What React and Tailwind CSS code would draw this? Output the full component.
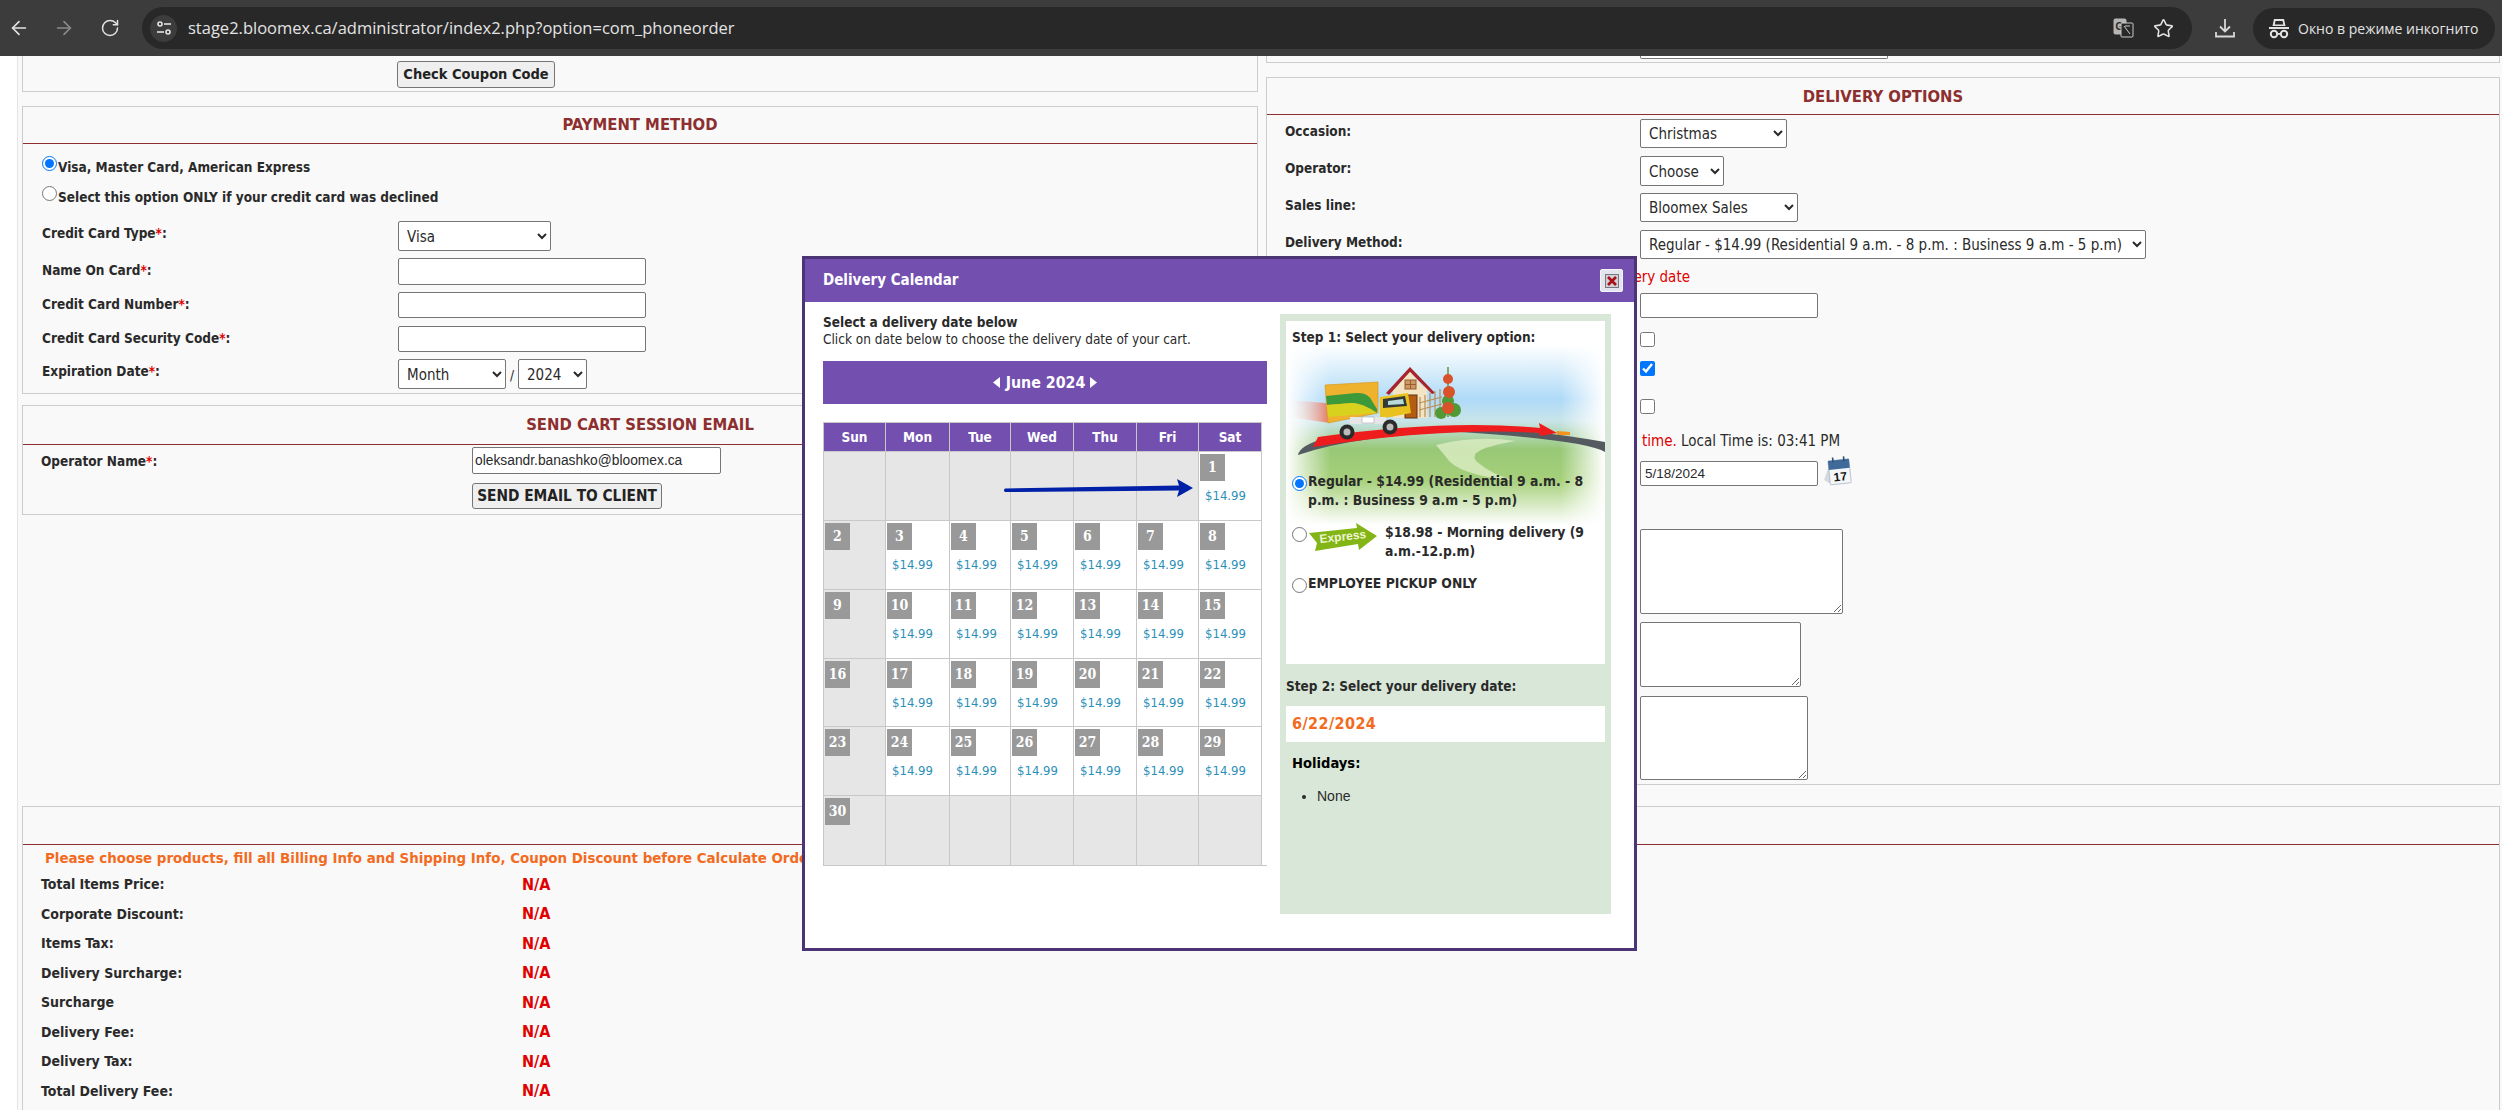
import React from "react";
import { ArrowLeft, ArrowRight, RotateCw, Star } from "lucide-react";

const days = [
  [null, null, null, null, null, null, 1],
  [2, 3, 4, 5, 6, 7, 8],
  [9, 10, 11, 12, 13, 14, 15],
  [16, 17, 18, 19, 20, 21, 22],
  [23, 24, 25, 26, 27, 28, 29],
  [30, null, null, null, null, null, null],
];
const rowHeights = ["h-[69px]", "h-[69px]", "h-[69px]", "h-[68px]", "h-[69px]", "h-[69px]"];
const totals = [
  "Total Items Price:",
  "Corporate Discount:",
  "Items Tax:",
  "Delivery Surcharge:",
  "Surcharge",
  "Delivery Fee:",
  "Delivery Tax:",
  "Total Delivery Fee:",
];

function Req() {
  return <span className="text-[#e00000]">*</span>;
}

function ChromeBar() {
  return (
    <div className="h-[56px] bg-[#3c3c3c] flex items-center text-[#e3e3e3] font-['Open_Sans',sans-serif] [font-stretch:normal]">
      <div className="w-[142px] flex items-center shrink-0">
        <ArrowLeft size={22} strokeWidth={1.8} className="ml-[8px]" />
        <ArrowRight size={22} strokeWidth={1.8} className="ml-[23px] text-[#8a8a8a]" />
        <RotateCw size={20} strokeWidth={1.8} className="ml-[25px]" />
      </div>
      <div className="w-[2050px] h-[42px] bg-[#282828] rounded-full flex items-center shrink-0">
        <div className="w-[27px] h-[27px] ml-[8px] rounded-full bg-[#3c3c3c] flex items-center justify-center">
          <svg width="16" height="16" viewBox="0 0 16 16" fill="none" stroke="#e3e3e3" strokeWidth="1.6">
            <circle cx="4" cy="4" r="2" />
            <path d="M8 4h7" />
            <circle cx="12" cy="12" r="2" />
            <path d="M1 12h7" />
          </svg>
        </div>
        <div className="ml-[11px] text-[16.5px]">
          stage2.bloomex.ca/administrator/index2.php?option=com_phoneorder
        </div>
        <div className="ml-auto flex items-center">
          <svg width="21" height="20" viewBox="0 0 21 20">
            <rect x="0.5" y="0.5" width="13" height="16" rx="2" fill="#b5b5b5" />
            <text x="2.5" y="12" fontSize="10" fontWeight="700" fill="#282828" fontFamily="Liberation Sans">G</text>
            <rect x="8" y="5" width="12" height="14" rx="1" fill="#282828" stroke="#c8c8c8" />
            <path d="M11 8l6 8M17 8h-5" stroke="#c8c8c8" fill="none" />
          </svg>
          <Star size={21} strokeWidth={1.8} className="ml-[19px] mr-[18px]" />
        </div>
      </div>
      <svg width="22" height="22" viewBox="0 0 22 22" fill="none" stroke="#d8d8d8" strokeWidth="1.8" className="ml-[22px]">
        <path d="M11 2v12M6 9.5l5 5 5-5M2 15v4.5h18V15" />
      </svg>
      <div className="w-[242px] h-[41px] ml-[17px] bg-[#282828] rounded-full flex items-center">
        <svg width="20" height="22" viewBox="0 0 20 22" fill="#e3e3e3" className="ml-[16px]">
          <path d="M5 2h10l1.5 7h-13z M6.5 4h7l.8 3.5H5.8z" fillRule="evenodd" />
          <rect x="0" y="10" width="20" height="2" />
          <circle cx="5" cy="17" r="3.2" fill="none" stroke="#e3e3e3" strokeWidth="2" />
          <circle cx="15" cy="17" r="3.2" fill="none" stroke="#e3e3e3" strokeWidth="2" />
          <rect x="8" y="16" width="4" height="1.8" />
        </svg>
        <div className="ml-[9px] text-[14px] whitespace-nowrap">Окно в режиме инкогнито</div>
      </div>
    </div>
  );
}

function PanelTitle({ children, h = "h-[37px]" }) {
  return (
    <div className={`${h} border-b border-[#8d2f2f] flex items-center justify-center pt-[1px] font-bold text-[16.5px] text-[#8d2f2f]`}>
      {children}
    </div>
  );
}

function Field({ label, className = "", children }) {
  return (
    <div className={`flex items-start ${className}`}>
      <div className="w-[356px] pt-[4px] leading-[16px] font-bold">{label}</div>
      {children}
    </div>
  );
}

function Sel({ className, value }) {
  return (
    <select defaultValue={value} className={`bg-white border border-[#767676] rounded-[2px] pl-[4px] pt-[1px] text-[15px] ${className}`}>
      <option>{value}</option>
    </select>
  );
}

const inputClass = "bg-white border border-[#767676] rounded-[2px]";

function LeftColumn() {
  return (
    <div className="w-[1236px] shrink-0">
      <div className="h-[36px] border border-t-0 border-[#cccccc] flex justify-start pl-[374px] pt-[5px]">
        <button className="w-[158px] h-[27px] bg-[#efefef] border border-[#767676] rounded-[3px] font-bold text-[#222] text-[14.5px]">
          Check Coupon Code
        </button>
      </div>

      <div className="mt-[14px] h-[288px] border border-b-[#cccccc] border-[#cccccc]">
        <PanelTitle>PAYMENT METHOD</PanelTitle>
        <div className="pl-[19px] pt-[12px]">
          <label className="h-[30px] flex items-start font-bold">
            <input type="radio" name="pay" defaultChecked className="w-[15px] h-[15px] m-0" />
            <span className="ml-[1px] mt-[3px] leading-[16px]">Visa, Master Card, American Express</span>
          </label>
          <label className="h-[30px] flex items-start font-bold">
            <input type="radio" name="pay" className="w-[15px] h-[15px] m-0" />
            <span className="ml-[1px] mt-[3px] leading-[16px]">Select this option ONLY if your credit card was declined</span>
          </label>
          <Field className="mt-[5px]" label={<>Credit Card Type<Req />:</>}>
            <Sel className="w-[153px] h-[30px]" value="Visa" />
          </Field>
          <Field className="mt-[7px]" label={<>Name On Card<Req />:</>}>
            <input className={`${inputClass} w-[248px] h-[27px]`} />
          </Field>
          <Field className="mt-[7px]" label={<>Credit Card Number<Req />:</>}>
            <input className={`${inputClass} w-[248px] h-[26px]`} />
          </Field>
          <Field className="mt-[8px]" label={<>Credit Card Security Code<Req />:</>}>
            <input className={`${inputClass} w-[248px] h-[26px]`} />
          </Field>
          <Field className="mt-[7px]" label={<>Expiration Date<Req />:</>}>
            <Sel className="w-[108px] h-[30px]" value="Month" />
            <span className="w-[12px] text-center pt-[6px]">/</span>
            <Sel className="w-[69px] h-[30px]" value="2024" />
          </Field>
        </div>
      </div>

      <div className="mt-[11px] h-[110px] border border-[#cccccc]">
        <PanelTitle h="h-[39px]">SEND CART SESSION EMAIL</PanelTitle>
        <div className="pl-[18px] pt-[2px] flex items-start">
          <div className="w-[431px] pt-[6px] leading-[16px] font-bold">
            Operator Name<Req />:
          </div>
          <div className="flex flex-col items-start">
            <input
              defaultValue="oleksandr.banashko@bloomex.ca"
              className={`${inputClass} w-[249px] h-[27px] pl-[2px] font-['Liberation_Sans',sans-serif] [font-stretch:normal] text-[13.8px]`}
            />
            <button className="mt-[9px] w-[190px] h-[26px] bg-[#efefef] border border-[#767676] rounded-[3px] font-bold text-[#222] text-[15.3px]">
              SEND EMAIL TO CLIENT
            </button>
          </div>
        </div>
      </div>
    </div>
  );
}

function RightRow({ className = "", label, children }) {
  return (
    <div className={`flex items-start ${className}`}>
      <div className="w-[355px] pt-[4px] leading-[16px] font-bold">{label}</div>
      {children}
    </div>
  );
}

function CalendarIcon() {
  return (
    <svg width="30" height="30" viewBox="0 0 30 30" className="ml-[5px] -mt-[5px]">
      <path d="M1 24 L8 4 L8 28z" fill="#d5dadf" />
      <g transform="rotate(-6 15 15)">
        <rect x="6" y="4" width="21" height="24" rx="1" fill="#f4f6f8" stroke="#8fa4b8" strokeWidth="0.6" />
        <rect x="6" y="4" width="21" height="9" fill="#3f6a9a" />
        <path d="M11 1v5M22 1v5" stroke="#2f4f73" strokeWidth="1.6" />
        <text x="10" y="25" fontSize="12" fontWeight="700" fill="#151515" fontFamily="Liberation Sans">17</text>
      </g>
    </svg>
  );
}

function RightColumn() {
  return (
    <div className="w-[1234px] shrink-0">
      <div className="h-[7px] border border-t-0 border-[#cccccc] pl-[373px]">
        <div className="w-[248px] h-[3px] bg-white border border-t-0 border-[#767676] rounded-b-[2px]" />
      </div>
      <div className="mt-[14px] h-[708px] border border-[#cccccc]">
        <div className="h-[37px] border-b border-[#8d2f2f] flex items-center justify-center pt-[3px] font-bold text-[16.5px] text-[#8d2f2f]">
          DELIVERY OPTIONS
        </div>
        <div className="pl-[18px] pt-[4px]">
          <RightRow label="Occasion:">
            <Sel className="w-[147px] h-[29px]" value="Christmas" />
          </RightRow>
          <RightRow className="mt-[8px]" label="Operator:">
            <Sel className="w-[84px] h-[30px]" value="Choose" />
          </RightRow>
          <RightRow className="mt-[7px]" label="Sales line:">
            <Sel className="w-[158px] h-[29px]" value="Bloomex Sales" />
          </RightRow>
          <RightRow className="mt-[8px]" label="Delivery Method:">
            <Sel className="w-[506px] h-[29px]" value="Regular - $14.99 (Residential 9 a.m. - 8 p.m. : Business 9 a.m - 5 p.m)" />
          </RightRow>
          <div className="w-[405px] mt-[10px] h-[16px] leading-[16px] text-right text-[#e00000] text-[15px] whitespace-nowrap">
            Please choose delivery date
          </div>
          <div className="ml-[355px] mt-[8px]">
            <input className={`${inputClass} block w-[178px] h-[25px]`} />
            <input type="checkbox" className="block w-[15px] h-[15px] m-0 mt-[14px]" />
            <input type="checkbox" defaultChecked className="block w-[15px] h-[15px] m-0 mt-[14px]" />
            <input type="checkbox" className="block w-[15px] h-[15px] m-0 mt-[23px]" />
            <div className="mt-[19px] pl-[2px] leading-[16px] h-[16px] text-[15px]">
              <span className="text-[#e00000]">time.</span> Local Time is: 03:41 PM
            </div>
            <div className="mt-[12px] flex items-start">
              <input defaultValue="5/18/2024" className={`${inputClass} w-[178px] h-[25px] pl-[4px] font-['Liberation_Sans',sans-serif] [font-stretch:normal] text-[13.5px]`} />
              <CalendarIcon />
            </div>
            <textarea className={`${inputClass} block w-[203px] h-[85px] mt-[43px]`} />
            <textarea className={`${inputClass} block w-[161px] h-[65px] mt-[8px]`} />
            <textarea className={`${inputClass} block w-[168px] h-[84px] mt-[9px]`} />
          </div>
        </div>
      </div>
    </div>
  );
}

function Totals() {
  return (
    <div className="mt-[21px] ml-[22px] mr-[2px] h-[320px] border border-[#cccccc]">
      <PanelTitle h="h-[38px]"></PanelTitle>
      <div className="pl-[18px]">
        <div className="pt-[5px] pl-[4px] h-[25px] leading-[16px] font-bold text-[#f26b21] text-[14.9px] whitespace-nowrap">
          Please choose products, fill all Billing Info and Shipping Info, Coupon Discount before Calculate Order
        </div>
        {totals.map((t) => (
          <div key={t} className="h-[29.5px] flex items-center">
            <div className="w-[481px] font-bold text-[14px]">{t}</div>
            <div className="font-bold text-[#e00000] text-[16px]">N/A</div>
          </div>
        ))}
      </div>
    </div>
  );
}

function Calendar() {
  return (
    <div className="relative mt-[18px] w-[439px]">
      <div className="border-l border-t border-[#c8c8c8] grid grid-cols-[62px_64px_61px_63px_63px_62px_63px]">
        {["Sun", "Mon", "Tue", "Wed", "Thu", "Fri", "Sat"].map((d) => (
          <div key={d} className="h-[29px] bg-[#7350b0] border-r border-b border-[#c8c8c8] flex items-center justify-center text-white font-bold">
            {d}
          </div>
        ))}
        {days.map((week, r) =>
          week.map((d, c) => {
            const open = d && c > 0;
            return (
              <div
                key={`${r}-${c}`}
                className={`${rowHeights[r]} border-r border-[#c8c8c8] ${r < 5 ? "border-b" : ""} ${open ? "bg-white" : "bg-[#e6e6e6]"}`}
              >
                {d && (
                  <div className="ml-[1px] mt-[2px] w-[25px] h-[27px] bg-[#999999] flex items-center justify-center text-white font-bold font-['DejaVu_Serif',serif] text-[14px]">
                    {d}
                  </div>
                )}
                {open && <div className="ml-[6px] mt-[7px] leading-[16px] text-[13px] text-[#2b8fb8]">$14.99</div>}
              </div>
            );
          })
        )}
      </div>
      <div className="h-px w-[444px] bg-[#c8c8c8]" />
      <svg width="190" height="18" viewBox="0 0 190 18" className="absolute left-[180px] top-[57px]">
        <path d="M2 9.5 L176 6.5 L174 0 L190 9 L174 18 L176 11.5 L2 13 Q0 11.2 2 9.5z" fill="#0020a8" />
      </svg>
    </div>
  );
}

function TruckScene() {
  return (
    <svg width="319" height="180" viewBox="0 0 319 180" className="absolute left-0 top-[24px]">
      <defs>
        <linearGradient id="sky" x1="0" y1="0" x2="0" y2="1">
          <stop offset="0" stopColor="#ffffff" />
          <stop offset="0.13" stopColor="#dceffb" />
          <stop offset="0.3" stopColor="#aedaf8" />
          <stop offset="0.42" stopColor="#c8e4ea" />
          <stop offset="0.58" stopColor="#98c876" />
          <stop offset="0.75" stopColor="#a6d07a" />
          <stop offset="1" stopColor="#ffffff" />
        </linearGradient>
        <linearGradient id="fade" x1="0" y1="0" x2="1" y2="0">
          <stop offset="0" stopColor="#ffffff" />
          <stop offset="0.14" stopColor="#ffffff" stopOpacity="0" />
          <stop offset="0.86" stopColor="#ffffff" stopOpacity="0" />
          <stop offset="1" stopColor="#ffffff" />
        </linearGradient>
        <linearGradient id="trail" x1="0" y1="0" x2="1" y2="0">
          <stop offset="0" stopColor="#ffffff" stopOpacity="0" />
          <stop offset="1" stopColor="#ef5a3c" stopOpacity="0.8" />
        </linearGradient>
      </defs>
      <rect width="319" height="180" fill="url(#sky)" />
      <rect width="319" height="180" fill="url(#fade)" />
      <path d="M150 100 Q190 90 230 96 Q180 104 190 116 Q206 130 230 136 Q170 130 160 112z" fill="#dcecc4" opacity="0.8" />
      <path d="M12 110 Q14 100 40 93 Q170 70 319 97 V107 Q300 95 174 87 Q70 90 12 110z" fill="#555a60" />
      <path d="M27 102 L32 92 Q160 74 254 83 L253 78 L271 88 L254 91 L253 88 Q160 82 27 102z" fill="#ee1c1c" />
      <path d="M271 86 L284 87 L284 90 L271 90z" fill="#f0941e" />
      <path d="M0 55 L40 58 L44 78 L2 72z" fill="url(#trail)" />
      {/* house */}
      <rect x="107" y="42" width="34" height="31" fill="#f3e4c4" />
      <path d="M100 48 L124 22 L149 48 L146 49 L124 27 L103 50z" fill="#a8242a" />
      <path d="M107 46 L124 27 L141 46z" fill="#f3e4c4" />
      <rect x="119" y="35" width="11" height="9" fill="#c99a68" stroke="#9b5b2b" />
      <path d="M124.5 35v9M119 39.5h11" stroke="#9b5b2b" />
      <rect x="119" y="50" width="12" height="23" fill="#b45c12" stroke="#5d3310" />
      {/* fence and flowers */}
      <path d="M134 72V52M139 72V50M144 72V48M149 72V46M154 72V44M133 58L156 52M133 65L156 59" stroke="#b98e56" strokeWidth="1.2" />
      <path d="M162 22 V72" stroke="#6b8f3c" strokeWidth="1.5" />
      <circle cx="155" cy="68" r="6" fill="#4f9a35" />
      <circle cx="168" cy="65" r="7" fill="#4f9a35" />
      <circle cx="162" cy="56" r="6" fill="#4f9a35" />
      <circle cx="162" cy="34" r="5" fill="#d8532a" />
      <circle cx="163" cy="47" r="6" fill="#d8532a" />
      <circle cx="162" cy="63" r="6" fill="#d8532a" />
      {/* truck */}
      <path d="M39 40 L92 37 L92 68 L42 78z" fill="#eeb22e" stroke="#d89a20" strokeWidth="0.7" />
      <path d="M40 51 L70 48 Q82 47 86 56 L91 64 L91 68 Q76 58 66 58 L41 60z" fill="#3d9a3a" />
      <path d="M41 60 L66 58 Q76 58 91 68 L42 72z" fill="#d8d21e" />
      <path d="M94 52 L122 48 L125 68 L94 74z" fill="#e9c21f" />
      <path d="M97 54 L119 51 L121 61 L97 63z" fill="#303a38" />
      <path d="M102 56 L117 54 L118 59 L102 60z" fill="#b9d8d8" />
      <rect x="64" y="72" width="36" height="7" fill="#e6e6e6" />
      <rect x="76" y="72" width="12" height="6" fill="#ffffff" stroke="#999" strokeWidth="0.5" />
      <circle cx="61" cy="87" r="7.5" fill="#2b2b2b" />
      <circle cx="61" cy="87" r="3.5" fill="#bcbcbc" />
      <circle cx="104" cy="82" r="7.5" fill="#2b2b2b" />
      <circle cx="104" cy="82" r="3.5" fill="#bcbcbc" />
    </svg>
  );
}

function Express() {
  return (
    <svg width="68" height="28" viewBox="0 0 68 28" className="ml-[2px] shrink-0">
      <path d="M0 10 L48 5 L47 0 L68 13 L50 27 L49 21 L6 28 L8 20z" fill="#84b516" />
      <text x="11" y="20" fontSize="12" fontWeight="700" fill="#eef6d4" fontFamily="Liberation Sans" transform="rotate(-6 11 20)">Express</text>
    </svg>
  );
}

function DeliveryOptions() {
  return (
    <div className="w-[331px] h-[600px] bg-[#d8e7d7] px-[6px] pt-[7px] shrink-0">
      <div className="relative h-[343px] bg-white px-[6px] pt-[8px] font-bold">
        <TruckScene />
        <div className="relative leading-[16px]">Step 1: Select your delivery option:</div>
        <label className="relative mt-[127px] flex items-start leading-[19px] text-[13.8px]">
          <input type="radio" name="del" defaultChecked className="w-[15px] h-[15px] m-0 mt-[4px] shrink-0" />
          <span className="ml-[1px]">Regular - $14.99 (Residential 9 a.m. - 8<br />p.m. : Business 9 a.m - 5 p.m)</span>
        </label>
        <label className="relative mt-[13px] flex items-start leading-[19px] text-[13.8px]">
          <input type="radio" name="del" className="w-[15px] h-[15px] m-0 mt-[4px] shrink-0" />
          <Express />
          <span className="ml-[8px]">$18.98 - Morning delivery (9<br />a.m.-12.p.m)</span>
        </label>
        <label className="relative mt-[13px] flex items-start leading-[19px] text-[13.8px]">
          <input type="radio" name="del" className="w-[15px] h-[15px] m-0 mt-[4px] shrink-0" />
          <span className="ml-[1px]">EMPLOYEE PICKUP ONLY</span>
        </label>
      </div>
      <div className="mt-[14px] leading-[16px] font-bold">Step 2: Select your delivery date:</div>
      <div className="mt-[12px] h-[36px] bg-white flex items-center pl-[6px] font-bold text-[#f26b21] text-[16px] tracking-[0.4px]">
        6/22/2024
      </div>
      <div className="mt-[13px] pl-[6px] leading-[16px] font-bold text-black text-[14.6px]">Holidays:</div>
      <ul className="mt-[17px] pl-[31px] list-disc font-['Liberation_Sans',sans-serif] [font-stretch:normal] text-[14px] leading-[16px]">
        <li>None</li>
      </ul>
    </div>
  );
}

function Modal() {
  return (
    <div className="absolute left-[802px] top-[256px] w-[835px] h-[695px] bg-white border-[3px] border-[#4b3575]">
      <div className="h-[43px] bg-[#7350b0] flex items-center justify-between pl-[18px] pr-[11px]">
        <div className="text-white font-bold text-[15px]">Delivery Calendar</div>
        <button className="w-[23px] h-[23px] bg-[#e4e4ee] border border-[#f4f4f8] rounded-[2px] flex items-center justify-center">
          <svg width="14" height="14" viewBox="0 0 14 14">
            <rect x="0.5" y="0.5" width="13" height="13" fill="#d0d0d8" stroke="#777780" />
            <path d="M3 3l8 8M11 3l-8 8" stroke="#a80f14" strokeWidth="2.6" />
          </svg>
        </button>
      </div>
      <div className="flex pt-[12px] pl-[18px]">
        <div className="w-[444px] shrink-0">
          <div className="leading-[17px] font-bold">Select a delivery date below</div>
          <div className="leading-[17px]">Click on date below to choose the delivery date of your cart.</div>
          <div className="mt-[13px] h-[43px] bg-[#7350b0] flex items-center justify-center text-white font-bold text-[15.8px]">
            <svg width="7" height="11" viewBox="0 0 7 11" className="mr-[6px]">
              <path d="M7 0v11L0 5.5z" fill="#ffffff" />
            </svg>
            June 2024
            <svg width="7" height="11" viewBox="0 0 7 11" className="ml-[5px]">
              <path d="M0 0v11l7-5.5z" fill="#ffffff" />
            </svg>
          </div>
          <Calendar />
        </div>
        <div className="ml-[13px]">
          <DeliveryOptions />
        </div>
      </div>
    </div>
  );
}

export default function App() {
  return (
    <div className="relative w-[2502px] h-[1110px] overflow-hidden bg-white text-[13.5px] text-[#2a2a2a] font-['DejaVu_Sans',Verdana,sans-serif] [font-stretch:condensed]">
      <ChromeBar />
      <div className="ml-[17px] h-[1054px] bg-[#f9f9f9] border-l border-[#e4e4e4]">
        <div className="-ml-[18px]">
          <div className="flex ml-[22px] gap-[8px] h-[729px]">
            <LeftColumn />
            <RightColumn />
          </div>
          <Totals />
        </div>
      </div>
      <Modal />
    </div>
  );
}
